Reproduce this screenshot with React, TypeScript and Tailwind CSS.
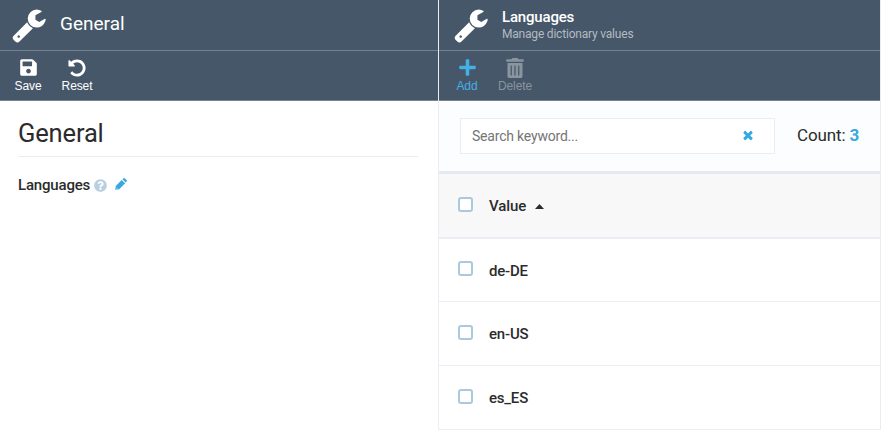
import React from 'react';
import { FaPlus, FaSave, FaTrashAlt, FaQuestionCircle } from 'react-icons/fa';

const WRENCH =
  'M448 1472q0-26-19-45t-45-19-45 19-19 45 19 45 45 19 45-19 19-45zm644-420l-682 682q-37 37-90 37-52 0-91-37l-106-108q-38-36-38-90 0-53 38-91l681-681q39 98 114.5 173.5t173.5 114.5zm634-435q0 39-23 106-47 134-164.5 217.5t-258.5 83.5q-185 0-316.5-131.5t-131.5-316.5 131.5-316.5 316.5-131.5q58 0 121.5 16.5t107.5 46.5q16 11 16 28t-16 28l-293 169v224l193 107q5-3 79-48.5t135.5-81 70.5-35.5q15 0 23.5 10t8.5 25z';
const UNDO =
  'M1664 896q0 156-61 298t-164 245-245 164-298 61q-172 0-327-72.5t-264-204.5q-7-10-6.5-22.5t8.5-20.5l137-138q10-9 25-9 16 2 23 12 73 95 179 147t225 52q104 0 198.5-40.5t163.5-109.5 109.5-163.5 40.5-198.5-40.5-198.5-109.5-163.5-163.5-109.5-198.5-40.5q-98 0-188 35.5t-160 101.5l137 138q31 30 14 69-17 40-59 40h-448q-26 0-45-19t-19-45v-448q0-42 40-59 39-17 69 14l130 129q107-101 244.5-156.5t284.5-55.5q156 0 298 61t245 164 164 245 61 298z';
const TIMES =
  'M1490 1322q0 40-28 68l-136 136q-28 28-68 28t-68-28l-294-294-294 294q-28 28-68 28t-68-28l-136-136q-28-28-28-68t28-68l294-294-294-294q-28-28-28-68t28-68l136-136q28-28 68-28t68 28l294 294 294-294q28-28 68-28t68 28l136 136q28 28 28 68t-28 68l-294 294 294 294q28 28 28 68z';

function Glyph({ d, className }: { d: string; className: string }) {
  return (
    <svg viewBox="0 0 1792 1792" fill="currentColor" className={className}>
      <path d={d} />
    </svg>
  );
}

function Pencil() {
  return (
    <svg viewBox="0 0 12 12" fill="currentColor" className="mt-[-2px] ml-[8px] size-3 text-[#36a9e1]">
      <path d="M0.2 11.8 0.8 8 6.7 1.9 10.1 5.3 4.2 11.2ZM7.4 1.2 8.3.4Q9.2-.3 9.9.4L11.6 2.1Q12.2 2.8 11.6 3.6L10.8 4.6Z" />
      <path d="m1.3 9.6 1.2 1.2" stroke="#fff" strokeWidth="0.6" />
    </svg>
  );
}

function Tool({ label, className, children }: { label: string; className: string; children: React.ReactNode }) {
  return (
    <button className={`flex h-[50px] flex-col items-center pt-[6px] ${className}`}>
      <span className="flex h-[21px] items-center justify-center">{children}</span>
      <span className="font-['Liberation_Sans',sans-serif] text-[12px] leading-[17px] tracking-[-0.1px] whitespace-nowrap">
        {label}
      </span>
    </button>
  );
}

function Box() {
  return <span className="mt-[-3px] size-[15px] shrink-0 rounded-[3px] border-2 border-[#a9c9de] bg-white" />;
}

export default function App() {
  return (
    <div className="flex h-[430px] w-[881px] overflow-hidden bg-white font-[Roboto,sans-serif] text-[#2b2b2b]">
      <section className="w-[438px] shrink-0">
        <header className="flex h-[51px] items-center border-b border-[#75828f] bg-[#465769] text-white">
          <Glyph d={WRENCH} className="ml-[11px] size-[36px] shrink-0" />
          <h2 className="mt-[-2px] ml-[13px] text-[19px] leading-6">General</h2>
        </header>
        <div className="flex h-[50px] border-b border-[#75828f] bg-[#465769] text-white">
          <Tool label="Save" className="ml-[13px] w-[30px]">
            <FaSave size={19} />
          </Tool>
          <Tool label="Reset" className="ml-[18px] w-[32px]">
            <Glyph d={UNDO} className="size-5" />
          </Tool>
        </div>
        <div className="mx-[18px] w-[400px]">
          <h1 className="h-[56px] border-b border-[#ebedf4] pt-[16px] text-[25.5px] leading-[32px] tracking-[-0.15px]">
            General
          </h1>
          <div className="mt-[17px] flex h-[22px] items-center text-[15px] font-medium tracking-[-0.18px]">
            <span>Languages</span>
            <FaQuestionCircle size={13} className="ml-[4px] text-[#b8cfdf]" />
            <Pencil />
          </div>
        </div>
      </section>

      <section className="w-[443px] shrink-0 border-x border-[#ebedf4]">
        <header className="flex h-[51px] items-center border-b border-[#75828f] bg-[#465769] text-white">
          <Glyph d={WRENCH} className="ml-[14px] size-[36px] shrink-0" />
          <div className="mt-px ml-[13px]">
            <h2 className="text-[15px] leading-[18px] font-medium tracking-[-0.18px]">Languages</h2>
            <p className="text-[12px] leading-[17px] tracking-[-0.2px] text-[#b3bac1]">Manage dictionary values</p>
          </div>
        </header>
        <div className="flex h-[50px] border-b border-[#75828f] bg-[#465769]">
          <Tool label="Add" className="ml-[16px] w-6 text-[#43b0e6]">
            <FaPlus size={19} />
          </Tool>
          <Tool label="Delete" className="ml-[18px] w-[36px] text-[#8a949f]">
            <FaTrashAlt size={20} />
          </Tool>
        </div>
        <div className="flex h-[73px] items-center border-b-[3px] border-[#e6e9f1] bg-[#fbfdff]">
          <div className="mt-[-1px] ml-[21px] flex h-[36px] w-[315px] items-center border border-[#eaedf3] bg-white pl-[11px]">
            <span className="w-[269px] pt-px text-[14px] tracking-[-0.2px] text-[#757575]">Search keyword...</span>
            <Glyph d={TIMES} className="mt-[-2px] size-[14px] text-[#36a9e1]" />
          </div>
          <span className="ml-[22px] text-[17px] tracking-[-0.12px]">
            Count: <b className="text-[#36a9e1]">3</b>
          </span>
        </div>
        <div className="flex h-[65px] items-center border-b-2 border-[#ebedf4] bg-[#f8f8f8] pl-[19px]">
          <Box />
          <span className="ml-[16px] pt-px text-[15px] font-medium tracking-[-0.1px]">Value</span>
          <svg viewBox="0 0 9 5" className="mt-px ml-[9px] h-[5px] w-[9px]" fill="#2b2b2b">
            <path d="M0 5 4.5 0 9 5Z" />
          </svg>
        </div>
        <div className="flex flex-col">
          {['de-DE', 'en-US', 'es_ES'].map((value) => (
            <div key={value} className="flex h-[64px] items-center border-b border-[#ebedf4] pl-[19px] first:h-[63px]">
              <Box />
              <span className="ml-[16px] pt-[2px] text-[15px] font-medium tracking-[-0.2px]">{value}</span>
            </div>
          ))}
        </div>
      </section>
    </div>
  );
}
